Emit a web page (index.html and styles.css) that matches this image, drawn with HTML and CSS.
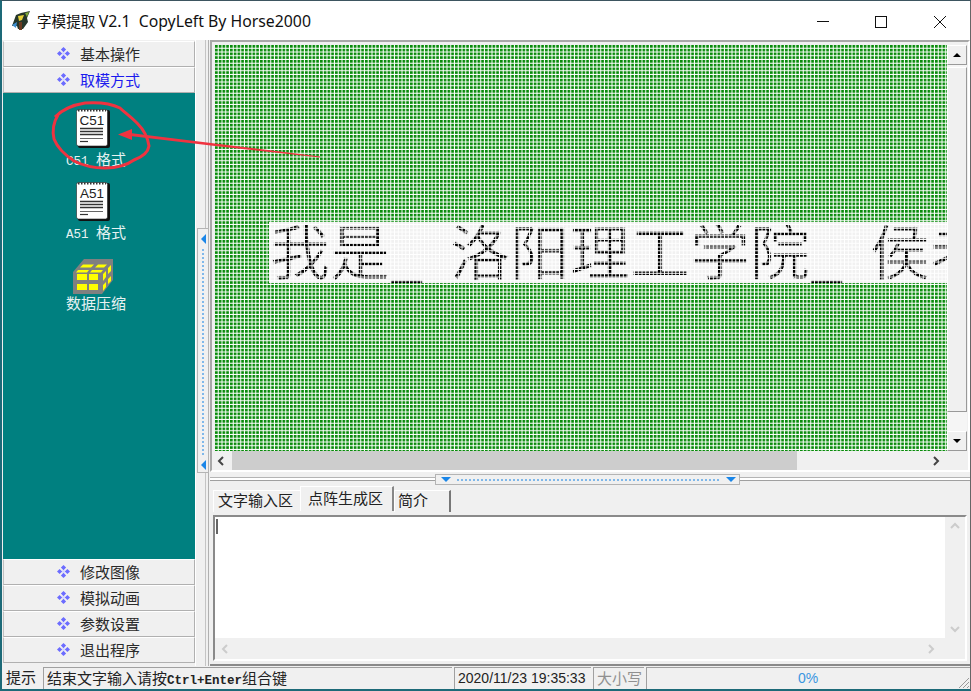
FILE: index.html
```html
<!DOCTYPE html>
<html lang="zh-CN">
<head>
<meta charset="utf-8">
<title>字模提取 V2.1</title>
<link rel="stylesheet" href="styles.css">
</head>
<body>
<svg class="defs" width="0" height="0" aria-hidden="true">
  <defs>
    <symbol id="diamond" viewBox="0 0 14 14">
      <path d="M7 0l2.800 2.800L7 5.600 4.200 2.800zM7 8.400l2.800 2.800L7 14l-2.800-2.800zM2.800 4.200L5.600 7 2.800 9.800 0 7zM11.200 4.200L14 7l-2.800 2.800L8.400 7z" fill="#6c6cff"/>
      <rect x="5.600" y="5.600" width="2.800" height="2.800" fill="#d4d4ff"/>
    </symbol>
    <symbol id="note" viewBox="0 0 34 40">
      <rect x="2" y="2" width="32" height="38" rx="2" fill="#111"/>
      <rect x="0.500" y="1.500" width="31" height="36.500" rx="2" fill="#fff" stroke="#222" stroke-width=".6"/>
      <path d="M2 2.500H30" stroke="#333" stroke-width="2" stroke-dasharray="1.500 1.500"/>
      <path d="M4 20.500H27M4 23.500H27M4 26.500H27" stroke="#333" stroke-width="1.400"/>
      <path d="M4 30.500H27" stroke="#666" stroke-width="1"/>
      <path d="M4 33.500H12" stroke="#333" stroke-width="1.200"/>
    </symbol>
    <pattern id="dot-green" width="3.75" height="3.75" patternUnits="userSpaceOnUse">
      <rect width="2.700" height="2.700" fill="#068a08"/>
    </pattern>
    <pattern id="dot-grey" width="3.75" height="3.75" patternUnits="userSpaceOnUse">
      <rect width="3.75" height="3.75" fill="#fff"/>
      <rect width="2.800" height="2.800" fill="#f1f1f1"/>
    </pattern>
    <pattern id="dot-black" width="3.75" height="3.75" patternUnits="userSpaceOnUse">
      <rect width="3.75" height="3.75" fill="#fff"/>
      <rect width="2.800" height="2.800" fill="#000"/>
    </pattern>
    <clipPath id="band"><rect x="54" y="177" width="678" height="61"/></clipPath>
  </defs>
</svg>

<div class="window">
  <header class="titlebar">
    <svg class="app-icon" width="20" height="20" viewBox="0 0 20 20">
      <path d="M1 15L5 4l5-2 9-2-3 7 1 4-5 7H7l-1-3z" fill="#26362a"/>
      <path d="M7 5l6-1-2 5-3 1z" fill="#e8d23a"/>
      <path d="M1 14l5-3-1 6z" fill="#3f8ed0"/>
      <path d="M8 11h3v8H8z" fill="#6b3a20"/>
      <path d="M14 2l4-1-2 5z" fill="#7fa83a"/>
    </svg>
    <span class="title-text">字模提取 <span class="title-latin">V2.1&nbsp; CopyLeft By Horse2000</span></span>
    <div class="win-controls">
      <svg class="win-btn" width="58" height="38" viewBox="0 0 58 38"><path d="M22 19.500H34" stroke="#111" stroke-width="1"/></svg>
      <svg class="win-btn" width="58" height="38" viewBox="0 0 58 38"><rect x="22.500" y="14.500" width="11" height="11" fill="none" stroke="#111"/></svg>
      <svg class="win-btn" width="58" height="38" viewBox="0 0 58 38"><path d="M23 14l12 12M35 14L23 26" stroke="#111" stroke-width="1"/></svg>
    </div>
  </header>

  <div class="main">
    <aside class="side">
      <div class="nav-btn"><svg class="nav-ico"><use href="#diamond"/></svg><span>基本操作</span></div>
      <div class="nav-btn nav-active"><svg class="nav-ico"><use href="#diamond"/></svg><span>取模方式</span></div>
      <div class="side-body">
        <div class="tool">
          <svg class="tool-note" viewBox="0 0 34 40"><use href="#note"/><text x="16" y="16.500" class="note-text">C51</text></svg>
          <span class="tool-label"><span class="label-mono">C51 </span>格式</span>
        </div>
        <div class="tool">
          <svg class="tool-note" viewBox="0 0 34 40"><use href="#note"/><text x="16" y="16.500" class="note-text">A51</text></svg>
          <span class="tool-label"><span class="label-mono">A51 </span>格式</span>
        </div>
        <div class="tool tool-cube">
          <svg class="cube" viewBox="0 0 40 36">
            <path d="M0 13L11 0H40V21L29 35H0z" fill="#808080"/>
            <path d="M4 15h10v6H4zM16 15h9v6h-9zM4 25h10v6H4zM16 25h9v6h-9z" fill="#ffff00"/>
            <path d="M10 5.500h11l-3 3H7zM25 5.500h9l-3 3h-9zM5 11h11l-2 2.500H3zM19 11h11l-2 2.500H17z" fill="#ffff00"/>
            <path d="M30 15l3-3v6l-3 4zM35 9l3-3v6l-3 3zM30 26l3-3v5l-3 4zM35 20l3-3v5l-3 3z" fill="#ffff00"/>
          </svg>
          <span class="tool-label">数据压缩</span>
        </div>
      </div>
      <div class="nav-btn"><svg class="nav-ico"><use href="#diamond"/></svg><span>修改图像</span></div>
      <div class="nav-btn"><svg class="nav-ico"><use href="#diamond"/></svg><span>模拟动画</span></div>
      <div class="nav-btn"><svg class="nav-ico"><use href="#diamond"/></svg><span>参数设置</span></div>
      <div class="nav-btn"><svg class="nav-ico"><use href="#diamond"/></svg><span>退出程序</span></div>
    </aside>

    <div class="vsplit">
      <div class="vgrip">
        <i class="tri tri-left"></i>
        <i class="dots-v"></i>
        <i class="tri tri-left"></i>
      </div>
    </div>

    <section class="right">
      <div class="matrix">
        <div class="matrix-top">
          <svg class="dot-grid" width="732" height="406" viewBox="0 0 732 406">
            <rect width="732" height="406" fill="#fff"/>
            <rect width="732" height="406" fill="url(#dot-green)"/>
            <rect x="54" y="177" width="678" height="61" fill="url(#dot-grey)"/>
            <text class="dot-text" clip-path="url(#band)" fill="url(#dot-black)" stroke="url(#dot-grey)" y="230" x="55 115 175 235 295 355 415 475 535 595 655 715">我是_洛阳理工学院_侯老</text>
          </svg>
          <div class="vscroll">
            <div class="sb-btn"><i class="arrow-up"></i></div>
            <div class="sb-thumb-v"></div>
            <div class="sb-btn sb-btn-down"><i class="arrow-down"></i></div>
          </div>
        </div>
        <div class="hscroll">
          <svg class="chev" width="12" height="12" viewBox="0 0 12 12"><path d="M8 2L4 6l4 4" fill="none" stroke="#444" stroke-width="2"/></svg>
          <div class="sb-thumb-h"></div>
          <svg class="chev" width="12" height="12" viewBox="0 0 12 12"><path d="M4 2l4 4-4 4" fill="none" stroke="#444" stroke-width="2"/></svg>
        </div>
      </div>

      <div class="hsplit">
        <div class="hgrip">
          <i class="tri tri-down"></i>
          <i class="dots-h"></i>
          <i class="tri tri-down"></i>
        </div>
      </div>

      <div class="tabs">
        <div class="tab">文字输入区</div>
        <div class="tab tab-on">点阵生成区</div>
        <div class="tab tab-last">简介</div>
      </div>

      <div class="editor">
        <div class="editor-top">
          <div class="editor-area"><i class="caret"></i></div>
          <div class="editor-vs">
            <svg width="12" height="12" viewBox="0 0 12 12"><path d="M2 8l4-4 4 4" fill="none" stroke="#ccc" stroke-width="2"/></svg>
            <svg width="12" height="12" viewBox="0 0 12 12"><path d="M2 4l4 4 4-4" fill="none" stroke="#ccc" stroke-width="2"/></svg>
          </div>
        </div>
        <div class="editor-hs">
          <svg width="12" height="12" viewBox="0 0 12 12"><path d="M8 2L4 6l4 4" fill="none" stroke="#ccc" stroke-width="2"/></svg>
          <svg width="12" height="12" viewBox="0 0 12 12"><path d="M4 2l4 4-4 4" fill="none" stroke="#ccc" stroke-width="2"/></svg>
        </div>
      </div>
    </section>
  </div>

  <footer class="status">
    <div class="cell cell-hint">提示</div>
    <div class="cell cell-msg">结束文字输入请按<span class="mono">Ctrl+Enter</span>组合键</div>
    <div class="cell cell-time">2020/11/23 19:35:33</div>
    <div class="cell cell-caps">大小写</div>
    <div class="cell cell-pct">0%</div>
    <svg class="grip" width="14" height="14" viewBox="0 0 14 14"><path d="M13 3L3 13M13 7l-6 6M13 11l-2 2" stroke="#999" stroke-width="1"/></svg>
  </footer>

  <svg class="annotation" width="971" height="691" viewBox="0 0 971 691">
    <path d="M55 117C62 110 72 105 85 103C98 102 110 103 120 108C124 112 130 116 137 123C144 130 148 138 149 146C148 153 142 157 134 160C127 165 118 168 105 168C95 168 84 166 74 161C65 155 58 149 54 139C52 130 53 123 58 115" fill="none" stroke="#ef3340" stroke-width="3"/>
    <path d="M130 136L215 146L320 157.500L320 156.500L215 143.500L130 133z" fill="#ef3340"/>
    <path d="M118 134.500L132 129V140z" fill="#ef3340"/>
  </svg>
</div>
</body>
</html>
```

FILE: styles.css
```css
* { box-sizing: border-box; }
html, body { margin: 0; padding: 0; background: #f0f0f0; }
body { width: 971px; height: 691px; overflow: hidden; font-family: "Noto Sans CJK SC", "Noto Sans", sans-serif; color: #222; }
.defs { position: absolute; }
i { display: block; }

.window { position: relative; width: 971px; height: 691px; display: flex; flex-direction: column; border-top: 1px solid #3d5560; border-left: 2px solid #1d6a78; border-bottom: 2px solid #1d6a78; border-right: 1px solid #666; background: #f0f0f0; }

.titlebar { height: 39px; flex: none; display: flex; align-items: center; background: #fff; padding-left: 9px; }
.app-icon { flex: none; margin-right: 6px; }
.title-text { font-size: 14.600px; color: #111; white-space: nowrap; }
.title-latin { font-family: "Noto Sans", sans-serif; font-size: 15.800px; }
.win-controls { margin-left: auto; display: flex; margin-right: 1px; }
.win-btn { display: block; }

.main { flex: 1; display: flex; min-height: 0; }

.side { width: 193px; flex: none; display: flex; flex-direction: column; padding: 1px 0 3px 1px; }
.nav-btn { height: 26px; flex: none; display: flex; align-items: center; padding: 0 0 2px 53px; gap: 10px; background: #f0f0f0; border: 1px solid #fff; border-bottom-color: #b0b0b0; border-right-color: #b0b0b0; border-left-color: #c0c0c0; font-size: 15px; color: #2a2a2a; }
.nav-active { color: #1a1aee; }
.nav-ico { width: 13px; height: 13px; flex: none; }
.side-body { flex: 1; background: #008080; display: flex; flex-direction: column; align-items: center; padding-top: 15px; color: #e6f2f2; }
.tool { display: flex; flex-direction: column; align-items: center; margin-bottom: 13px; padding-right: 6px; }
.tool-note { width: 34px; height: 40px; display: block; margin-right: 6px; }
.note-text { font-family: "Liberation Sans", sans-serif; font-size: 13.500px; text-anchor: middle; fill: #222; }
.tool-label { display: block; height: 18px; overflow: visible; font-size: 15px; line-height: 18px; margin-top: 2px; white-space: pre; }
.label-mono { font-family: "Liberation Mono", monospace; font-size: 12.500px; }
.tool-cube { margin-top: 5px; }
.tool-cube .tool-label { margin-top: -1px; }
.cube { width: 40px; height: 36px; display: block; margin-right: 6px; }

.vsplit { width: 15px; flex: none; padding: 188px 0 0 1px; border-left: 1px solid #fff; background: linear-gradient(90deg, #f0f0f0 9px, #c4c4c4 9px, #c4c4c4 10px, #f0f0f0 10px, #f0f0f0 12px, #b0b0b0 12px, #b0b0b0 13px, #f0f0f0 13px); }
.vgrip { width: 12px; height: 245px; border: 1px solid #b4b4b4; background: #f0f0f0; display: flex; flex-direction: column; align-items: center; padding: 5px 0 2px; gap: 5px; }
.dots-v { flex: 1; width: 2px; background: repeating-linear-gradient(180deg, #7fb8ea 0 2px, transparent 2px 4px); }
.dots-h { flex: 1; height: 2px; background: repeating-linear-gradient(90deg, #7fb8ea 0 2px, transparent 2px 4px); }
.tri { width: 0; height: 0; flex: none; }
.tri-left { border-top: 5px solid transparent; border-bottom: 5px solid transparent; border-right: 5px solid #1a86e8; }
.tri-down { border-left: 5px solid transparent; border-right: 5px solid transparent; border-top: 5px solid #1a86e8; }

.right { flex: 1; min-width: 0; display: flex; flex-direction: column; border-bottom: 2px solid #8a8a8a; }
.matrix { height: 432px; flex: none; border: 2px solid #a8a8a8; border-right-color: #fff; border-bottom-color: #fff; padding: 3px 0 0 3px; }
.matrix-top { display: flex; height: 406px; }
.dot-grid { display: block; flex: none; }
.dot-text { font-family: "Noto Sans CJK SC", sans-serif; font-size: 60px; stroke-width: .8px; }
.vscroll { width: 20px; flex: none; display: flex; flex-direction: column; background: #f5f5f5; }
.sb-btn { height: 20px; flex: none; background: #f0f0f0; border: 1px solid #fff; border-right-color: #999; border-bottom-color: #999; display: flex; align-items: center; justify-content: center; }
.sb-thumb-v { height: 345px; margin-top: 2px; flex: none; background: #f0f0f0; border: 1px solid #fff; border-right-color: #999; border-bottom-color: #999; }
.sb-btn-down { margin-top: auto; }
.arrow-up { border-left: 4px solid transparent; border-right: 4px solid transparent; border-bottom: 4px solid #000; }
.arrow-down { border-left: 4px solid transparent; border-right: 4px solid transparent; border-top: 4px solid #000; }
.hscroll { height: 19px; display: flex; align-items: center; justify-content: space-between; background: #f0f0f0; margin-right: 18px; padding-left: 0; }
.chev { flex: none; }
.hscroll .chev:last-child { margin-right: 8px; }
.sb-thumb-h { width: 565px; height: 19px; background: #cdcdcd; margin-left: 5px; margin-right: auto; }

.hsplit { height: 14px; flex: none; display: flex; justify-content: center; padding-top: 2px; background: linear-gradient(180deg, #f0f0f0 5px, #b4b4b4 5px, #b4b4b4 6px, #fff 6px, #fff 8px, #a0a0a0 8px, #a0a0a0 9px, #f0f0f0 9px); }
.hgrip { width: 305px; height: 11px; margin-right: 5px; border: 1px solid #b4b4b4; background: #f0f0f0; display: flex; align-items: center; padding: 0 3px 0 5px; gap: 6px; }

.tabs { height: 26px; flex: none; display: flex; align-items: flex-end; padding-left: 3px; }
.tab { height: 22px; padding: 0 3px 0 4px; font-size: 15px; line-height: 18px; width: 87px; border-top: 1px solid #fff; border-left: 1px solid #fff; white-space: nowrap; background: #f0f0f0; }
.tab-on { height: 25px; width: 94px; margin-bottom: 1px; border-right: 2px solid #888; line-height: 22px; padding-left: 7px; }
.tab-last { width: 57px; border-right: 2px solid #777; padding-left: 3px; }

.editor { flex: 1; margin: 3px; border: 2px solid #8a8a8a; border-right-color: #fff; border-bottom-color: #fff; display: flex; flex-direction: column; min-height: 0; }
.editor-top { flex: 1; display: flex; min-height: 0; }
.editor-area { flex: 1; background: #fff; padding: 2px 0 0 1px; }
.caret { width: 2px; height: 15px; background: #666; }
.editor-vs { width: 20px; flex: none; display: flex; flex-direction: column; justify-content: space-between; align-items: center; padding: 3px 0; background: #f0f0f0; }
.editor-hs { height: 21px; flex: none; display: flex; justify-content: space-between; align-items: center; padding: 0 28px 0 4px; }

.status { height: 23px; flex: none; display: flex; align-items: stretch; padding: 1px 0 0 2px; position: relative; font-size: 15px; }
.cell { border-left: 1px solid #a0a0a0; border-top: 1px solid #a0a0a0; margin-right: 2px; padding-left: 1px; line-height: 20px; white-space: nowrap; }
.cell-hint { width: 37px; border: 0; padding-left: 2px; }
.cell-msg { width: 409px; padding-left: 3px; }
.mono { font-family: "Liberation Mono", monospace; font-size: 12.500px; font-weight: 700; }
.cell-time { width: 137px; font-family: "Liberation Sans", sans-serif; font-size: 14px; padding-left: 3px; }
.cell-caps { width: 51px; color: #909090; padding-left: 3px; }
.cell-pct { flex: 1; text-align: center; color: #3a96e0; font-family: "Liberation Sans", sans-serif; font-size: 14px; margin-right: 0; padding-right: 2px; }
.grip { position: absolute; right: 0; bottom: 0; }

.annotation { position: absolute; left: -2px; top: -1px; pointer-events: none; }
```
